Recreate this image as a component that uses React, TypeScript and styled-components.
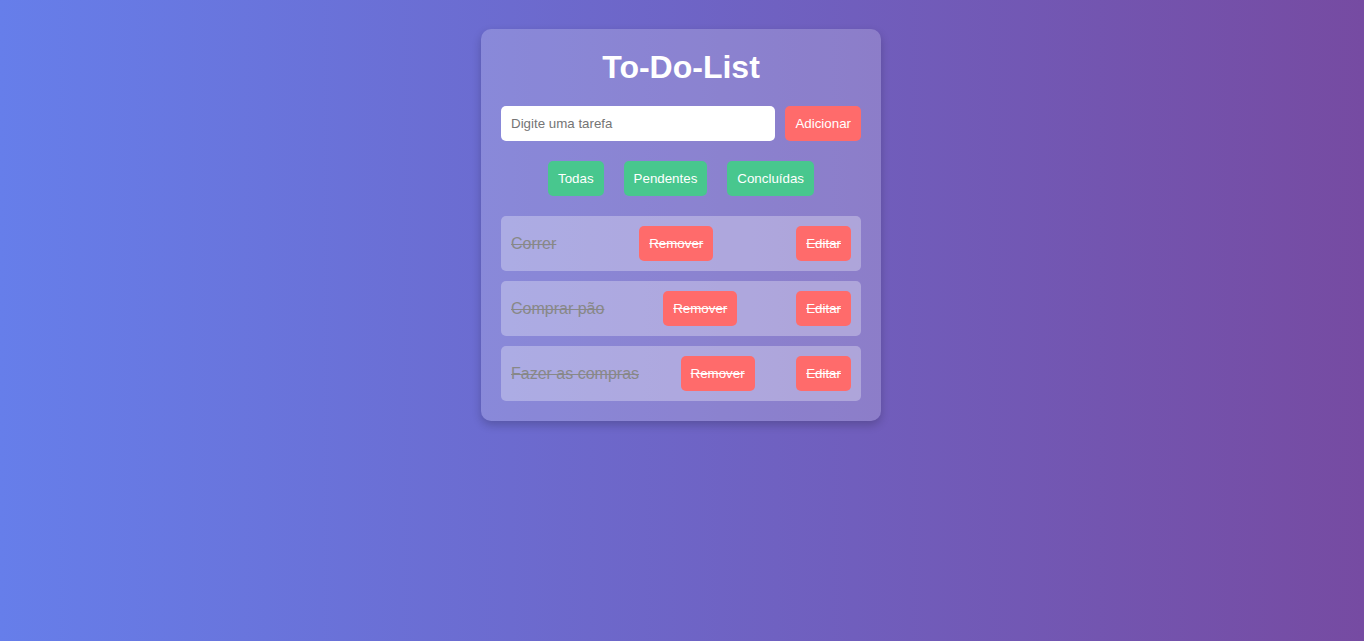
import React, { useState } from 'react';
import styled, { createGlobalStyle } from 'styled-components';

const GlobalStyle = createGlobalStyle`
  html, body {
    margin: 0;
    padding: 0;
    height: 100%;
  }
  body {
    font-family: "Liberation Sans", Arial, sans-serif;
    background: linear-gradient(to right, #667eea, #764ba2);
    min-height: 641px;
  }
`;

const Page = styled.div`
  display: flex;
  justify-content: center;
  padding: 29px 2px 0 0;
`;

const Card = styled.div`
  width: 400px;
  box-sizing: border-box;
  padding: 20px;
  background: rgba(255, 255, 255, 0.2);
  border-radius: 10px;
  box-shadow: 0 4px 10px rgba(0, 0, 0, 0.2);
`;

const Title = styled.h1`
  margin: 0 0 20px;
  text-align: center;
  color: #fff;
  font-size: 32px;
  font-weight: bold;
`;

const InputRow = styled.div`
  display: flex;
  gap: 10px;
  margin-bottom: 20px;
`;

const TaskInput = styled.input`
  flex: 1;
  padding: 10px;
  border: none;
  border-radius: 5px;
  font-family: "Liberation Sans", Arial, sans-serif;
  font-size: 13.33px;
  line-height: 15px;
  outline: none;
  &::placeholder {
    color: #757575;
  }
`;

const Button = styled.button<{ $tone: 'red' | 'green'; $struck?: boolean }>`
  padding: 10px;
  border: none;
  border-radius: 5px;
  background: ${p => (p.$tone === 'red' ? '#ff6b6b' : '#48c78e')};
  color: #fff;
  font-family: "Liberation Sans", Arial, sans-serif;
  font-size: 13.33px;
  line-height: 15px;
  cursor: pointer;
  text-decoration: ${p => (p.$struck ? 'line-through' : 'none')};
`;

const Filters = styled.div`
  display: flex;
  justify-content: center;
  gap: 20px;
  margin-bottom: 20px;
`;

const TaskList = styled.ul`
  list-style: none;
  margin: 0;
  padding: 0;
  display: flex;
  flex-direction: column;
  gap: 10px;
`;

const TaskItem = styled.li`
  display: flex;
  justify-content: space-between;
  align-items: center;
  padding: 10px;
  background: rgba(255, 255, 255, 0.3);
  border-radius: 5px;
`;

const TaskText = styled.span<{ $done: boolean }>`
  font-size: 16px;
  color: ${p => (p.$done ? '#888' : '#333')};
  text-decoration: ${p => (p.$done ? 'line-through' : 'none')};
`;

type Task = { text: string; done: boolean };

export default function App() {
  const [value, setValue] = useState('');
  const [tasks] = useState<Task[]>([
    { text: 'Correr', done: true },
    { text: 'Comprar pão', done: true },
    { text: 'Fazer as compras', done: true },
  ]);

  return (
    <>
      <GlobalStyle />
      <Page>
        <Card>
          <Title>To-Do-List</Title>
          <InputRow>
            <TaskInput
              placeholder="Digite uma tarefa"
              value={value}
              onChange={e => setValue(e.target.value)}
            />
            <Button $tone="red">Adicionar</Button>
          </InputRow>
          <Filters>
            <Button $tone="green">Todas</Button>
            <Button $tone="green">Pendentes</Button>
            <Button $tone="green">Concluídas</Button>
          </Filters>
          <TaskList>
            {tasks.map(t => (
              <TaskItem key={t.text}>
                <TaskText $done={t.done}>{t.text}</TaskText>
                <Button $tone="red" $struck={t.done}>Remover</Button>
                <Button $tone="red" $struck={t.done}>Editar</Button>
              </TaskItem>
            ))}
          </TaskList>
        </Card>
      </Page>
    </>
  );
}
